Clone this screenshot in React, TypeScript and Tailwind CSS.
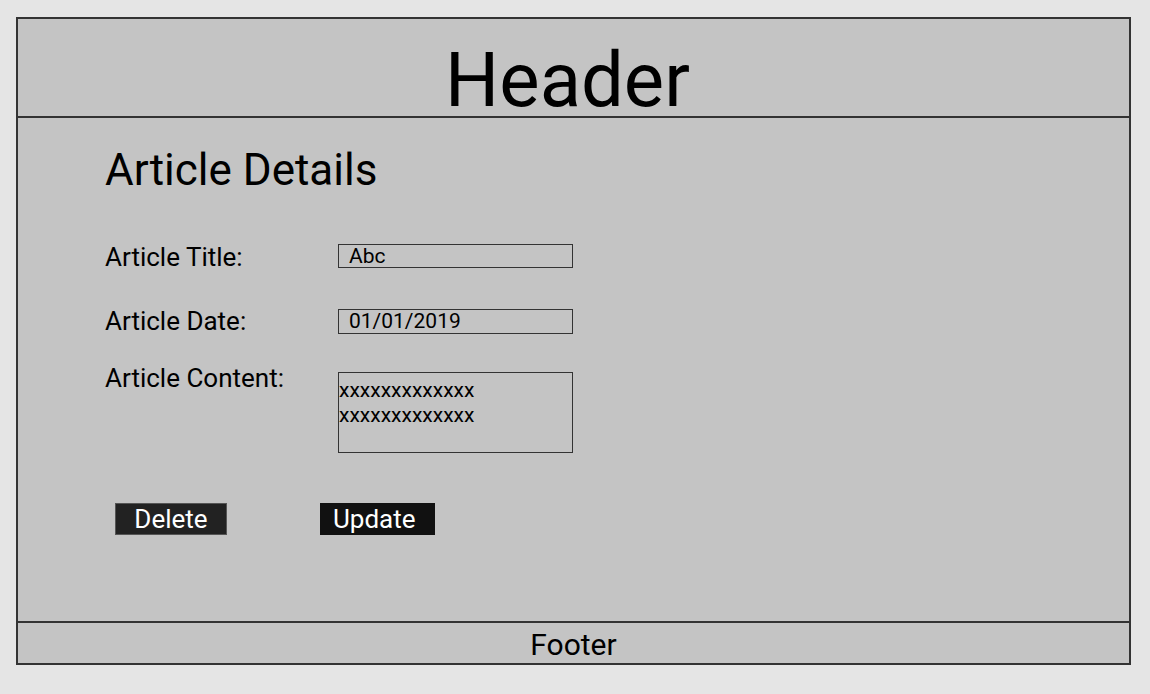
export default function App() {
  return (
    <div className="min-h-[694px] w-full bg-[#e5e5e5] pt-[17px] pl-[16px] font-['Roboto',sans-serif] text-black">
      <div className="flex h-[648px] w-[1115px] flex-col border-2 border-[#333] bg-[#c4c4c4]">
        <header className="flex h-[99px] shrink-0 items-start justify-center border-b-2 border-[#333] pt-[23px] pr-[12px]">
          <h1 className="text-[76px] leading-none">Header</h1>
        </header>

        <main className="flex-1 pl-[87px] pt-[26px]">
          <h2 className="text-[44px] leading-[52px]">Article Details</h2>

          <div className="mt-[46px] flex items-start">
            <label className="w-[233px] text-[26px] leading-[30px]">Article Title:</label>
            <div className="mt-[2px] h-[24px] w-[235px] border border-[#333] pl-[10px] text-[21px] leading-[22px]">
              Abc
            </div>
          </div>

          <div className="mt-[34px] flex items-start">
            <label className="w-[233px] text-[26px] leading-[30px]">Article Date:</label>
            <div className="mt-[3px] h-[25px] w-[235px] border border-[#333] pl-[10px] text-[21px] leading-[23px]">
              01/01/2019
            </div>
          </div>

          <div className="mt-[27px] flex items-start">
            <label className="w-[233px] text-[26px] leading-[30px]">Article Content:</label>
            <div className="mt-[9px] h-[81px] w-[235px] border border-[#333] pt-[5px] text-[21px] leading-[25px]">
              <div>xxxxxxxxxxxxx</div>
              <div>xxxxxxxxxxxxx</div>
            </div>
          </div>

          <div className="mt-[50px] flex items-start">
            <button className="ml-[10px] h-[32px] w-[112px] border border-[#555] bg-[#222] text-[26px] leading-[30px] text-white">
              Delete
            </button>
            <button className="ml-[93px] h-[32px] w-[115px] bg-[#111] pl-[13px] text-left text-[26px] leading-[30px] text-white">
              Update
            </button>
          </div>
        </main>

        <footer className="flex h-[42px] shrink-0 items-center justify-center border-t-2 border-[#333] pt-[3px] text-[30px] leading-none">
          Footer
        </footer>
      </div>
    </div>
  );
}
